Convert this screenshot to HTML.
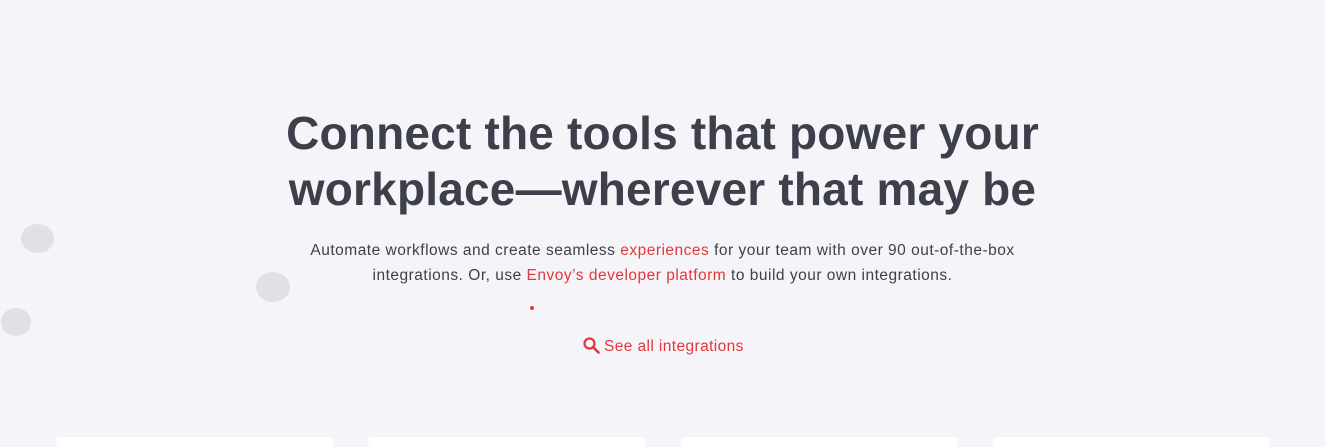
<!DOCTYPE html>
<html><head><style>
html,body{margin:0;padding:0;}
body{width:1325px;height:441px;background:#f5f5f9;position:relative;overflow:hidden;font-family:"Liberation Sans",sans-serif;color:#3d404b;}
h1{position:absolute;top:105px;left:0;width:1325px;margin:0;text-align:center;font-size:46px;font-weight:bold;line-height:56px;letter-spacing:0.2px;}
p{position:absolute;top:238px;left:0;width:1325px;margin:0;text-align:center;font-size:15.5px;line-height:25px;letter-spacing:0.5px;}
.r{color:#e2373a;}
.c{position:absolute;background:#e0e1e6;border-radius:50%;}
.card{position:absolute;top:437px;width:277px;height:10px;background:#fff;border-radius:4px;}
.see{position:absolute;top:337px;left:583px;font-size:15.5px;color:#e2373a;letter-spacing:0.4px;}
</style></head><body>
<h1>Connect the tools that power your<br>workplace—wherever that may be</h1>
<p>Automate workflows and create seamless <span class="r">experiences</span> for your team with over 90 out-of-the-box<br>integrations. Or, use <span class="r">Envoy’s developer platform</span> to build your own integrations.</p>
<div class="c" style="left:21px;top:224px;width:33px;height:29px"></div>
<div class="c" style="left:256px;top:272px;width:34px;height:30px"></div>
<div class="c" style="left:1px;top:308px;width:30px;height:28px"></div>
<div style="position:absolute;left:530px;top:306px;width:4px;height:4px;border-radius:50%;background:#e2373a"></div>
<div class="see"><svg width="17" height="17" viewBox="0 0 17 17" style="vertical-align:-3px;margin-right:4px"><circle cx="6.5" cy="6.5" r="5" fill="none" stroke="#e2373a" stroke-width="2.2"/><path d="M10 10L15.5 15.5" stroke="#e2373a" stroke-width="2.6" stroke-linecap="round"/></svg>See all integrations</div>
<div class="card" style="left:56px"></div>
<div class="card" style="left:368px"></div>
<div class="card" style="left:681px"></div>
<div class="card" style="left:993px"></div>
</body></html>
